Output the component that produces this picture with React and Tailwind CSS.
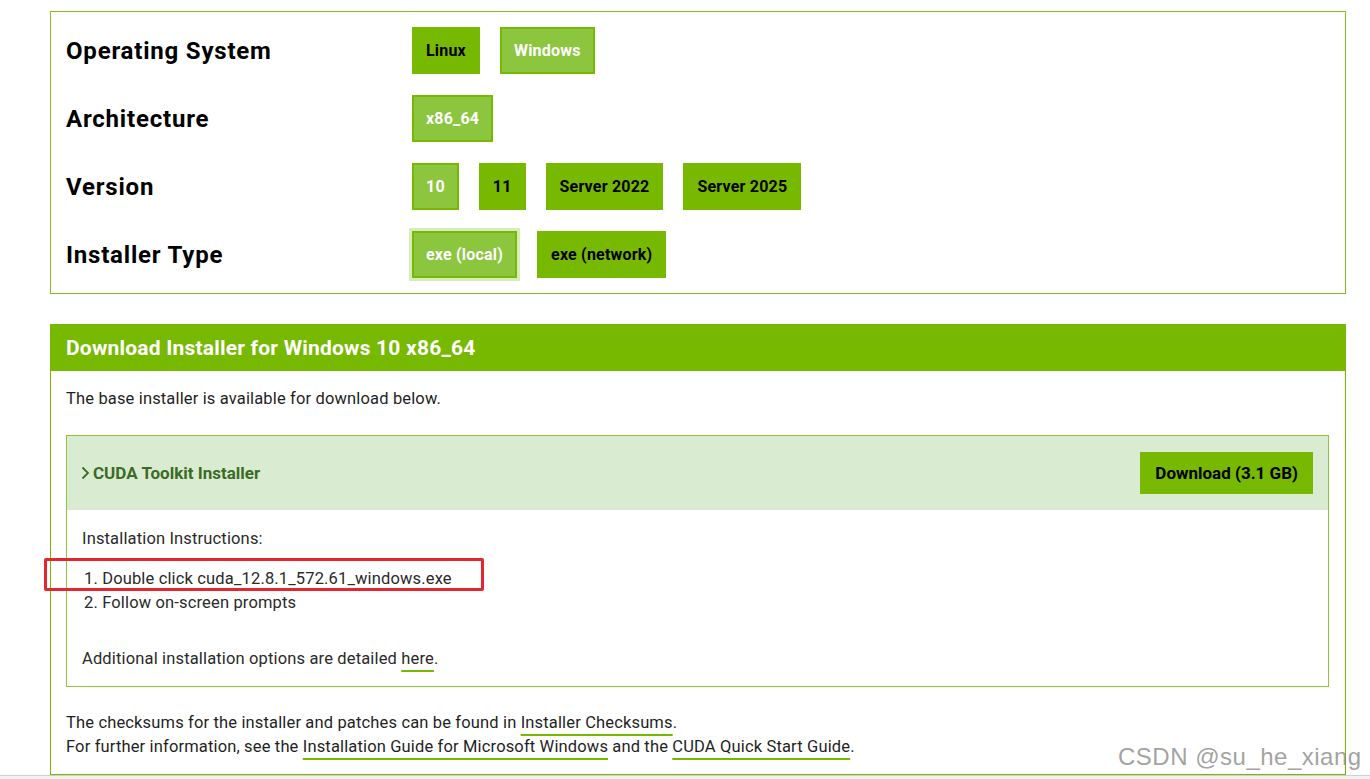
import React from "react";

const rows = [
    { label: "Operating System", options: [{ name: "Linux" }, { name: "Windows", active: true }] },
    { label: "Architecture", options: [{ name: "x86_64", active: true }] },
    {
        label: "Version",
        options: [{ name: "10", active: true }, { name: "11" }, { name: "Server 2022" }, { name: "Server 2025" }],
    },
    { label: "Installer Type", options: [{ name: "exe (local)", active: true, focused: true }, { name: "exe (network)" }] },
];

const OptionButton = ({ name, active, focused }) => {
    if (active) {
        return (
            <button
                className={
                    "h-[47px] px-[12px] bg-[#8cc63f] border-2 border-[#76b900] text-white font-bold text-[16px] tracking-[0.2px] " +
                    (focused ? "ring-[3px] ring-[#d6ecbb]" : "")
                }
            >
                {name}
            </button>
        );
    }
    return (
        <button className="h-[47px] px-[14px] bg-[#76b900] text-black font-bold text-[16px] tracking-[0.2px]">
            {name}
        </button>
    );
};

const GreenLink = ({ children }) => (
    <a className="underline decoration-[#76b900] decoration-2 underline-offset-[6px] cursor-pointer">
        {children}
    </a>
);

const Chevron = () => (
    <svg width="9" height="14" viewBox="0 0 9 14" className="mr-[3px]">
        <path d="M1.5 1.5 L7 7 L1.5 12.5" fill="none" stroke="#3b6b24" strokeWidth="1.8" />
    </svg>
);

export default function App() {
    return (
        <div
            className="relative w-[1370px] h-[779px] bg-white overflow-hidden text-[#1a1a1a]"
            style={{ fontFamily: "Roboto, 'Noto Sans', sans-serif" }}
        >
            <div className="pl-[50px] w-[1346px] pt-[11px]">
                {/* selector table */}
                <div className="border border-[#80bf1a] pl-[15px] pt-[15px] pb-[15px] flex flex-col gap-[21px]">
                    {rows.map((row) => (
                        <div key={row.label} className="flex items-center h-[47px]">
                            <div className="w-[346px] text-[24px] font-bold text-black tracking-[0.8px]">{row.label}</div>
                            <div className="flex gap-[20px] items-center">
                                {row.options.map((opt) => (
                                    <OptionButton key={opt.name} {...opt} />
                                ))}
                            </div>
                        </div>
                    ))}
                </div>

                {/* download panel */}
                <div className="mt-[30px] border border-[#76b900] border-t-0">
                    <div className="h-[47px] bg-[#76b900] flex items-center pt-[2px] px-[15px] text-white text-[21px] font-bold tracking-[0.2px]">
                        Download Installer for Windows 10 x86_64
                    </div>
                    <div className="px-[15px] pt-[16px] pb-[15px] text-[16.5px] tracking-[0.15px] leading-[24px] text-[#1f1f1f]">
                        <p>The base installer is available for download below.</p>

                        <div className="mt-[24px] border border-[#8cc63f] mr-[1px]">
                            <div className="h-[74px] bg-[#d9ecd2] flex items-center justify-between pl-[14px] pr-[15px]">
                                <div className="flex items-center text-[#3b6b24] font-bold text-[17px] tracking-normal">
                                    <Chevron />
                                    CUDA Toolkit Installer
                                </div>
                                <button className="h-[42px] px-[15px] bg-[#76b900] text-black font-bold text-[17px] tracking-normal">
                                    Download (3.1 GB)
                                </button>
                            </div>
                            <div className="px-[15px] pt-[17px] pb-[15px] text-[#2a2a2a]">
                                <p>Installation Instructions:</p>
                                <ol className="mt-[16px] pl-[2px]">
                                    <li>1. Double click cuda_12.8.1_572.61_windows.exe</li>
                                    <li>2. Follow on-screen prompts</li>
                                </ol>
                                <p className="mt-[32px]">
                                    Additional installation options are detailed <GreenLink>here</GreenLink>.
                                </p>
                            </div>
                        </div>

                        <p className="mt-[24px]">
                            The checksums for the installer and patches can be found in{" "}
                            <GreenLink>Installer Checksums</GreenLink>.
                        </p>
                        <p>
                            For further information, see the{" "}
                            <GreenLink>Installation Guide for Microsoft Windows</GreenLink> and the{" "}
                            <GreenLink>CUDA Quick Start Guide</GreenLink>.
                        </p>
                    </div>
                </div>
            </div>

            {/* bottom edge of the browser */}
            <div className="absolute left-0 right-0 top-[775px] h-[4px] bg-[#f1f1f1] border-t border-[#cfcfcf]" />

            {/* red highlight box */}
            <div className="absolute left-[44px] top-[558px] w-[440px] h-[33px] border-[3px] border-[#e3262f] rounded-[2px]" />

            {/* watermark */}
            <div
                className="absolute left-[1118px] top-[739px] text-[24px] text-[#8a8a8a]/80 tracking-[0.5px]"
                style={{ fontFamily: "'Liberation Sans', sans-serif" }}
            >
                CSDN @su_he_xiang
            </div>
        </div>
    );
}
